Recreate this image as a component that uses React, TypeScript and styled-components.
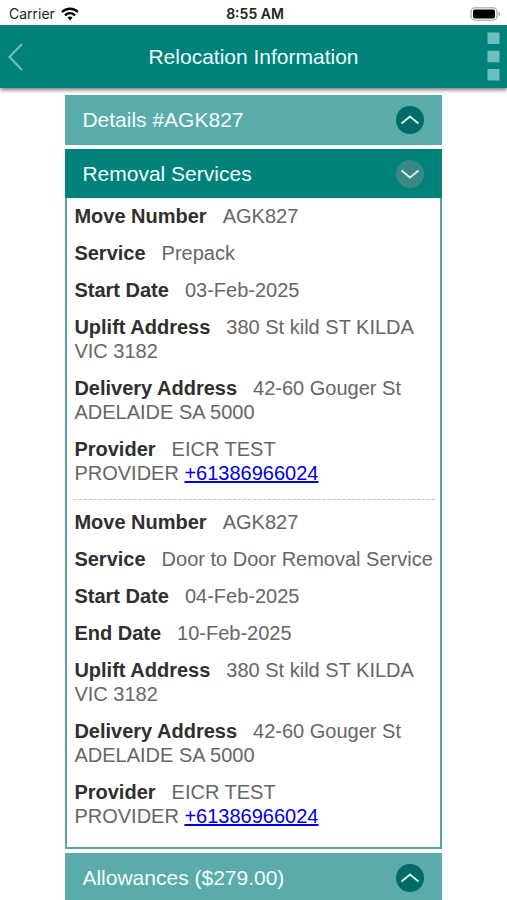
import React, { useState } from "react";
import styled, { createGlobalStyle } from "styled-components";

const GlobalStyle = createGlobalStyle`
  *, *::before, *::after { box-sizing: border-box; }
  body {
    margin: 0;
    background: #fff;
    color: #666;
    font-family: "Liberation Sans", Arial, sans-serif;
    font-size: 20px;
    line-height: 24px;
  }
`;

const Screen = styled.div`
  display: flex;
  flex-direction: column;
  height: 100vh;
`;

const StatusBar = styled.div`
  display: grid;
  grid-template-columns: 1fr auto 1fr;
  align-items: center;
  flex: none;
  height: 25px;
  padding: 2px 6px 0 9px;
  color: #222;
  font-family: Inter, sans-serif;
  font-size: 14px;
  line-height: 20px;
`;

const Carrier = styled.span`
  display: flex;
  align-items: center;
  gap: 6px;
`;

const Clock = styled.span`
  font-weight: 600;
`;

const BatteryIcon = styled.svg`
  justify-self: end;
`;

const Header = styled.header`
  display: grid;
  grid-template-columns: 60px 1fr 60px;
  align-items: center;
  flex: none;
  height: 63px;
  background: #00827b;
  box-shadow: 0 2px 4px rgba(60, 40, 50, 0.65);
  z-index: 1;
`;

const Title = styled.h1`
  margin: 0;
  color: #e9fffd;
  font-size: 21px;
  font-weight: 400;
  text-align: center;
`;

const IconButton = styled.button<{ $end?: boolean }>`
  display: flex;
  align-items: center;
  justify-content: ${(p) => (p.$end ? "flex-end" : "flex-start")};
  height: 63px;
  padding: 0 7px;
  border: 0;
  background: none;
  color: #6bbfbd;
  cursor: pointer;
`;

const Main = styled.main`
  flex: 1;
  min-height: 0;
  padding-top: 7px;
  overflow-y: auto;
  scrollbar-width: none;
`;

const Accordion = styled.div`
  display: flex;
  flex-direction: column;
  gap: 4px;
  width: 74.2%;
  margin: 0 auto;
`;

const Panel = styled.section`
  width: 100%;
`;

const PanelHeading = styled.h2`
  margin: 0;
  font-weight: 400;
`;

const PanelButton = styled.button<{ $open: boolean }>`
  display: flex;
  align-items: center;
  justify-content: space-between;
  width: 100%;
  height: ${(p) => (p.$open ? 49 : 50)}px;
  padding: 0 18px 0 17px;
  border: 0;
  background: ${(p) => (p.$open ? "#00827b" : "#5aabaa")};
  color: #f0fffe;
  font: inherit;
  font-size: 21px;
  text-align: left;
  cursor: pointer;
`;

const Toggle = styled.span<{ $open: boolean }>`
  display: flex;
  align-items: center;
  justify-content: center;
  width: 28px;
  height: 28px;
  border-radius: 50%;
  background: ${(p) => (p.$open ? "#388984" : "#006b66")};
`;

const PanelBody = styled.div`
  padding: 6px 5px 19px 7px;
  border: solid #55a5a1;
  border-width: 0 2px 2px;
`;

const ServiceList = styled.dl`
  display: flex;
  flex-direction: column;
  gap: 13px;
  margin: 0;

  & + & {
    margin-top: 14px;
    padding-top: 10px;
    border-top: 1px dashed #c4c4c4;
  }
`;

const Field = styled.div`
  dt, dd { display: inline; margin: 0; }
  dt { margin-right: 16px; color: #2f2f2f; font-weight: 700; }
`;

const Phone = styled.a`
  color: #0000e6;
  text-decoration: underline;
`;

type ServiceField = { label: string; value: string; phone?: string };

const address: ServiceField[] = [
  { label: "Uplift Address", value: "380 St kild ST KILDA VIC 3182" },
  { label: "Delivery Address", value: "42-60 Gouger St ADELAIDE SA 5000" },
  { label: "Provider", value: "EICR TEST PROVIDER", phone: "+61386966024" },
];

const services: ServiceField[][] = [
  [
    { label: "Move Number", value: "AGK827" },
    { label: "Service", value: "Prepack" },
    { label: "Start Date", value: "03-Feb-2025" },
    ...address,
  ],
  [
    { label: "Move Number", value: "AGK827" },
    { label: "Service", value: "Door to Door Removal Service" },
    { label: "Start Date", value: "04-Feb-2025" },
    { label: "End Date", value: "10-Feb-2025" },
    ...address,
  ],
];

function Section({ title, initialOpen = false, children }: {
  title: string;
  initialOpen?: boolean;
  children?: React.ReactNode;
}) {
  const [open, setOpen] = useState(initialOpen);
  return (
    <Panel>
      <PanelHeading>
        <PanelButton $open={open} aria-expanded={open} onClick={() => setOpen(!open)}>
          {title}
          <Toggle $open={open}>
            <svg width="20" height="12" viewBox="0 0 20 12" fill="none" stroke="#d5f5f4" strokeWidth="2" aria-hidden="true">
              <path d={open ? "M1.5 2.5 L10 9.5 L18.5 2.5" : "M1.5 9.5 L10 2.5 L18.5 9.5"} />
            </svg>
          </Toggle>
        </PanelButton>
      </PanelHeading>
      {open && children && <PanelBody>{children}</PanelBody>}
    </Panel>
  );
}

export default function App() {
  return (
    <>
      <GlobalStyle />
      <Screen>
        <StatusBar>
          <Carrier>
            Carrier
            <svg width="18" height="14" viewBox="0 0 18 14" fill="none" stroke="#000" strokeWidth="2.4" aria-hidden="true">
              <path d="M1 5 C5.5 0.7 12.5 0.7 17 5" />
              <path d="M4 8.3 C7 5.6 11 5.6 14 8.3" />
              <path d="M6.4 10.6 Q9 8.4 11.6 10.6 L9 13.5 Z" fill="#000" stroke="none" />
            </svg>
          </Carrier>
          <Clock>8:55 AM</Clock>
          <BatteryIcon width="31" height="14" viewBox="0 0 31 14" aria-hidden="true">
            <rect x="1" y="0.8" width="26" height="12.4" rx="4" fill="#fff" stroke="#bbb" strokeWidth="1.6" />
            <rect x="3" y="2.4" width="22" height="9.2" rx="2" fill="#000" />
            <path d="M28.5 4.5 Q32 7 28.5 9.5 Z" fill="#aaa" />
          </BatteryIcon>
        </StatusBar>
        <Header>
          <IconButton aria-label="Back">
            <svg width="16" height="28" viewBox="0 0 16 28" fill="none" stroke="currentColor" strokeWidth="2.2" aria-hidden="true">
              <path d="M15 1 L2.5 14 L15 27" />
            </svg>
          </IconButton>
          <Title>Relocation Information</Title>
          <IconButton $end aria-label="Menu">
            <svg width="13" height="49" viewBox="0 0 13 49" fill="currentColor" aria-hidden="true">
              <rect x="0.5" y="0.5" width="12" height="11.5" />
              <rect x="0.5" y="18.8" width="12" height="11.5" />
              <rect x="0.5" y="37" width="12" height="11.5" />
            </svg>
          </IconButton>
        </Header>
        <Main>
          <Accordion>
            <Section title="Details #AGK827" />
            <Section title="Removal Services" initialOpen>
              {services.map((fields, i) => (
                <ServiceList key={i}>
                  {fields.map((f) => (
                    <Field key={f.label}>
                      <dt>{f.label}</dt>
                      <dd>
                        {f.value}
                        {f.phone && <>{"\u00a0"}<Phone href={`tel:${f.phone}`}>{f.phone}</Phone></>}
                      </dd>
                    </Field>
                  ))}
                </ServiceList>
              ))}
            </Section>
            <Section title="Allowances ($279.00)" />
          </Accordion>
        </Main>
      </Screen>
    </>
  );
}
